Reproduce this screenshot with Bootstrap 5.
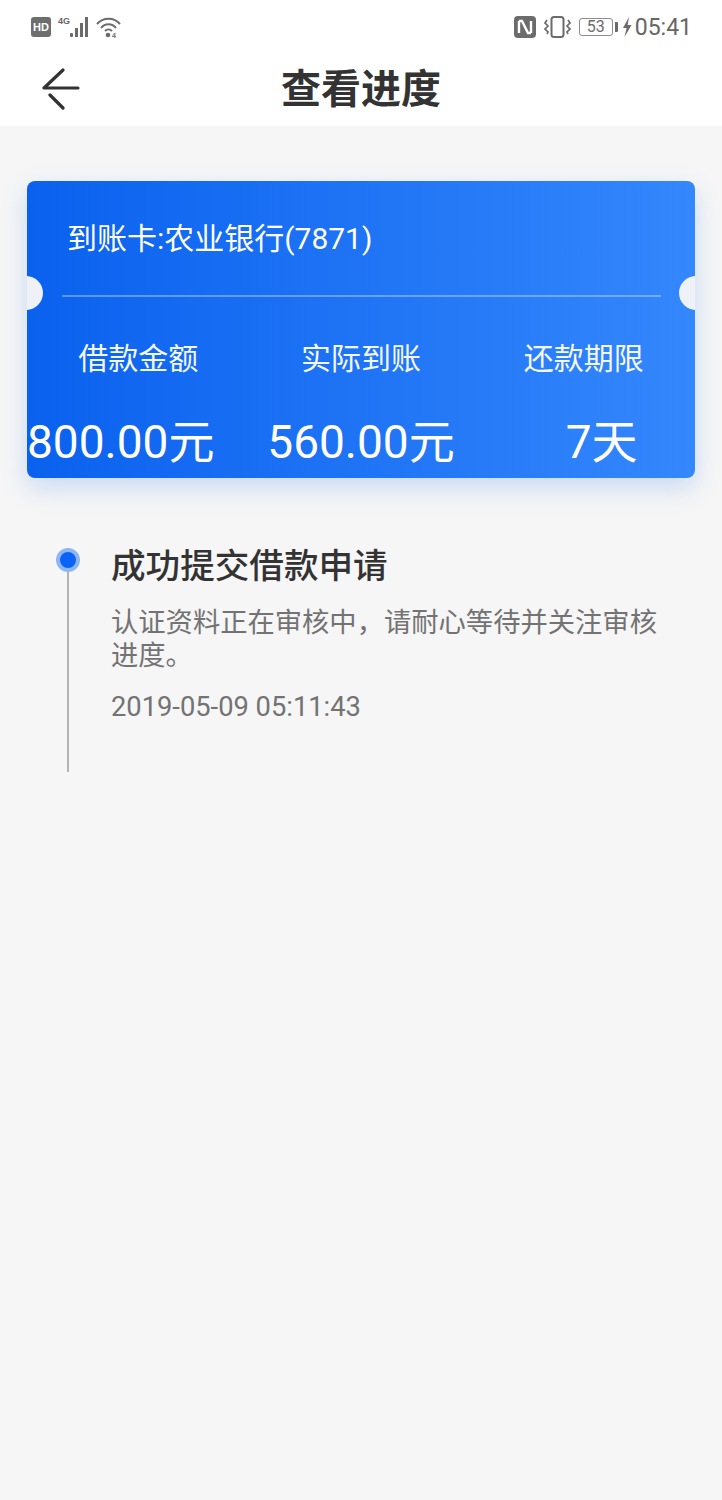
<!DOCTYPE html>
<html lang="zh-CN">
<head>
<meta charset="utf-8">
<title>查看进度</title>
<link href="https://cdn.jsdelivr.net/npm/bootstrap@5.3.0/dist/css/bootstrap.min.css" rel="stylesheet">
<style>
html, body { height: 100%; }
body { background: #f6f6f6; font-family: Roboto, "Noto Sans CJK SC", sans-serif; color: #333; width: 722px; min-height: 1500px; }
.top-zone { background: #fff; height: 126px; }
.status-row { height: 54px; padding: 0 30px 0 31px; color: #6b6b6b; }
.hd-tag { width: 20px; height: 20px; border-radius: 3px; background: #6e6e6e; color: #fff; font: 700 11px/20px "Liberation Sans", sans-serif; text-align: center; }
.net-tag { font: 700 9px/9px "Liberation Sans", sans-serif; color: #666; align-self: flex-start; margin: 17px 0 0 7px; }
.batt-box { width: 34px; height: 18px; border: 1px solid #8d8d8d; border-radius: 3px; font-size: 16px; line-height: 16px; text-align: center; color: #6b6b6b; }
.batt-tip { width: 3px; height: 10px; background: #6b6b6b; margin-left: 2px; border-radius: 0 1px 1px 0; }
.clock { font-size: 23px; line-height: 1; color: #666; margin-left: 3px; }
.title-row { height: 72px; }
.back-btn { position: absolute; left: 42px; top: 14px; }
.page-title { font-size: 40px; line-height: 72px; font-weight: 700; color: #333; margin: 0; }
.ticket { margin: 55px 27px 0; height: 297px; border-radius: 8px; background: linear-gradient(90deg, #0a61ee 0%, #3487fc 100%); box-shadow: 0 10px 26px rgba(40,120,235,.22); color: #fff; overflow: hidden; }
.notch { position: absolute; top: 95px; width: 34px; height: 34px; border-radius: 50%; background: #eef2f7; }
.notch-l { left: -18px; }
.notch-r { right: -18px; }
.bank-line { font-size: 30px; line-height: 40px; padding: 38px 0 0 40px; height: 114px; }
.ticket-rule { height: 2px; background: rgba(255,255,255,.32); margin: 0 34px 0 35px; }
.amount-grid { display: grid; grid-template-columns: repeat(3, 1fr); }
.lab { font-size: 30px; line-height: 40px; text-align: center; margin-top: 42px; color: #f3f7ff; }
.val { font-size: 46px; line-height: 54px; margin-top: 36px; white-space: nowrap; }
.val-a { text-align: left; }
.val-b { text-align: center; }
.val-c { text-align: center; padding-left: 36px; }
.tl-item { margin: 70px 40px 0 56px; height: 224px; }
.tl-rail { width: 24px; flex: none; }
.tl-dot { width: 24px; height: 24px; border-radius: 50%; background: #0a63f5; border: 4px solid #8db6f7; flex: none; margin-top: 0; }
.tl-line { width: 2px; flex: 1; background: #b4b4b4; margin-top: -1px; }
.tl-body { padding-left: 31px; }
.tl-title { font-size: 34.6px; line-height: 36px; color: #333; margin: 0; }
.tl-desc { font-size: 27.3px; line-height: 33px; color: #737373; margin: 23px 0 0; }
.tl-time { font-size: 27.3px; line-height: 33px; color: #737373; margin: 18px 0 0; }
</style>
</head>
<body class="m-0">
<div class="top-zone">
  <div class="status-row d-flex align-items-center">
    <div class="hd-tag">HD</div>
    <div class="net-tag">4G</div>
    <svg width="22" height="22" viewBox="0 0 22 22" class="ms-0"><g fill="#6b6b6b"><rect x="0" y="17" width="3" height="4" rx="1"/><rect x="5" y="12" width="3" height="9"/><rect x="10" y="7" width="3" height="14"/><rect x="15" y="1" width="3" height="20"/></g></svg>
    <svg width="26" height="22" viewBox="0 0 26 22" class="ms-1"><g fill="none" stroke="#6b6b6b" stroke-width="2"><path d="M1 8 C7 1 18 1 24 8"/><path d="M5 12 C9 7 16 7 20 12"/><path d="M9 15 C11 13 14 13 16 15"/></g><circle cx="12" cy="19" r="2.3" fill="#6b6b6b"/><text x="16" y="22" font-size="7" font-weight="700" fill="#6b6b6b" font-family="Liberation Sans, sans-serif">4</text></svg>
    <div class="flex-grow-1"></div>
    <svg width="22" height="22" viewBox="0 0 22 22"><rect width="22" height="22" rx="4" fill="#6b6b6b"/><path d="M5 5 V17 M5 5 L8 5 L14 17 L17 17 M17 17 V5" fill="none" stroke="#fff" stroke-width="2.4"/></svg>
    <svg width="27" height="24" viewBox="0 0 27 24" class="ms-2"><rect x="7.5" y="2" width="12" height="20" rx="2.5" fill="none" stroke="#6b6b6b" stroke-width="2"/><path d="M3 5 L1 8 L4 11 L1 14 L4 17 L3 19 M24 5 L26 8 L23 11 L26 14 L23 17 L24 19" fill="none" stroke="#6b6b6b" stroke-width="1.7"/></svg>
    <div class="batt-box ms-2">53</div>
    <div class="batt-tip"></div>
    <svg width="10" height="20" viewBox="0 0 10 20" class="ms-1"><path d="M7 0 L1 11 L4.6 11 L2.5 20 L9.5 8 L5.6 8 Z" fill="#6b6b6b"/></svg>
    <div class="clock">05:41</div>
  </div>
  <div class="title-row position-relative text-center">
    <svg class="back-btn" width="38" height="44" viewBox="0 0 38 44"><path d="M21 2 L2 20 H36 M8 27 L21 40" fill="none" stroke="#333" stroke-width="3.2" stroke-linecap="round" stroke-linejoin="round"/></svg>
    <h1 class="page-title">查看进度</h1>
  </div>
</div>

<section class="ticket position-relative">
  <span class="notch notch-l"></span>
  <span class="notch notch-r"></span>
  <div class="bank-line">到账卡:农业银行(7871)</div>
  <div class="ticket-rule"></div>
  <div class="amount-grid">
    <div class="lab">借款金额</div>
    <div class="lab">实际到账</div>
    <div class="lab">还款期限</div>
    <div class="val val-a">800.00元</div>
    <div class="val val-b">560.00元</div>
    <div class="val val-c">7天</div>
  </div>
</section>

<section class="tl-item d-flex">
  <div class="tl-rail d-flex flex-column align-items-center">
    <div class="tl-dot"></div>
    <div class="tl-line"></div>
  </div>
  <div class="tl-body">
    <h2 class="tl-title">成功提交借款申请</h2>
    <p class="tl-desc">认证资料正在审核中，请耐心等待并关注审核进度。</p>
    <p class="tl-time">2019-05-09 05:11:43</p>
  </div>
</section>
<script src="https://cdn.jsdelivr.net/npm/bootstrap@5.3.0/dist/js/bootstrap.bundle.min.js"></script>
</body>
</html>
